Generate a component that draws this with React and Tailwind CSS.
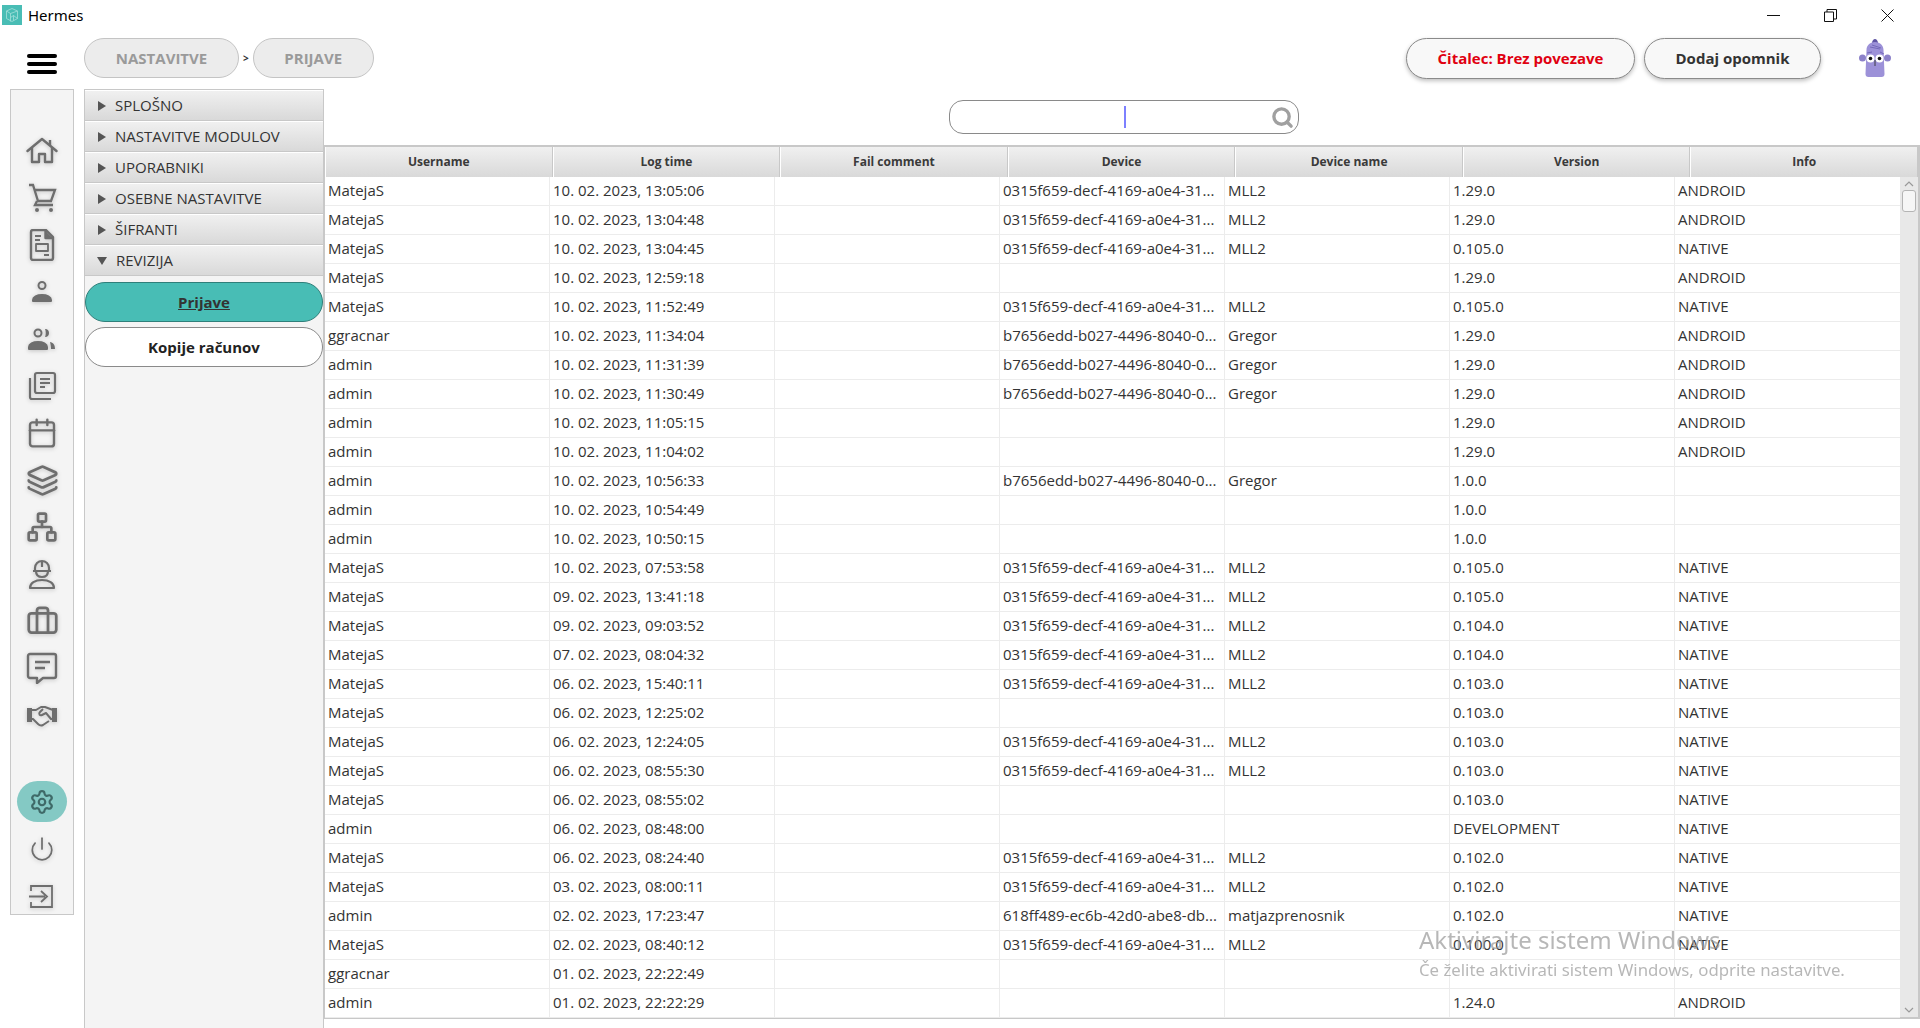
import { Calendar, Layers, Network, Briefcase, Settings, Power, Search } from 'lucide-react'

const DEV1 = '0315f659-decf-4169-a0e4-31...'
const DEV2 = 'b7656edd-b027-4496-8040-0...'
const DEV3 = '618ff489-ec6b-42d0-abe8-db...'

const columns = ['Username', 'Log time', 'Fail comment', 'Device', 'Device name', 'Version', 'Info']

const rows = [
  ['MatejaS', '10. 02. 2023, 13:05:06', DEV1, 'MLL2', '1.29.0', 'ANDROID'],
  ['MatejaS', '10. 02. 2023, 13:04:48', DEV1, 'MLL2', '1.29.0', 'ANDROID'],
  ['MatejaS', '10. 02. 2023, 13:04:45', DEV1, 'MLL2', '0.105.0', 'NATIVE'],
  ['MatejaS', '10. 02. 2023, 12:59:18', '', '', '1.29.0', 'ANDROID'],
  ['MatejaS', '10. 02. 2023, 11:52:49', DEV1, 'MLL2', '0.105.0', 'NATIVE'],
  ['ggracnar', '10. 02. 2023, 11:34:04', DEV2, 'Gregor', '1.29.0', 'ANDROID'],
  ['admin', '10. 02. 2023, 11:31:39', DEV2, 'Gregor', '1.29.0', 'ANDROID'],
  ['admin', '10. 02. 2023, 11:30:49', DEV2, 'Gregor', '1.29.0', 'ANDROID'],
  ['admin', '10. 02. 2023, 11:05:15', '', '', '1.29.0', 'ANDROID'],
  ['admin', '10. 02. 2023, 11:04:02', '', '', '1.29.0', 'ANDROID'],
  ['admin', '10. 02. 2023, 10:56:33', DEV2, 'Gregor', '1.0.0', ''],
  ['admin', '10. 02. 2023, 10:54:49', '', '', '1.0.0', ''],
  ['admin', '10. 02. 2023, 10:50:15', '', '', '1.0.0', ''],
  ['MatejaS', '10. 02. 2023, 07:53:58', DEV1, 'MLL2', '0.105.0', 'NATIVE'],
  ['MatejaS', '09. 02. 2023, 13:41:18', DEV1, 'MLL2', '0.105.0', 'NATIVE'],
  ['MatejaS', '09. 02. 2023, 09:03:52', DEV1, 'MLL2', '0.104.0', 'NATIVE'],
  ['MatejaS', '07. 02. 2023, 08:04:32', DEV1, 'MLL2', '0.104.0', 'NATIVE'],
  ['MatejaS', '06. 02. 2023, 15:40:11', DEV1, 'MLL2', '0.103.0', 'NATIVE'],
  ['MatejaS', '06. 02. 2023, 12:25:02', '', '', '0.103.0', 'NATIVE'],
  ['MatejaS', '06. 02. 2023, 12:24:05', DEV1, 'MLL2', '0.103.0', 'NATIVE'],
  ['MatejaS', '06. 02. 2023, 08:55:30', DEV1, 'MLL2', '0.103.0', 'NATIVE'],
  ['MatejaS', '06. 02. 2023, 08:55:02', '', '', '0.103.0', 'NATIVE'],
  ['admin', '06. 02. 2023, 08:48:00', '', '', 'DEVELOPMENT', 'NATIVE'],
  ['MatejaS', '06. 02. 2023, 08:24:40', DEV1, 'MLL2', '0.102.0', 'NATIVE'],
  ['MatejaS', '03. 02. 2023, 08:00:11', DEV1, 'MLL2', '0.102.0', 'NATIVE'],
  ['admin', '02. 02. 2023, 17:23:47', DEV3, 'matjazprenosnik', '0.102.0', 'NATIVE'],
  ['MatejaS', '02. 02. 2023, 08:40:12', DEV1, 'MLL2', '0.100.0', 'NATIVE'],
  ['ggracnar', '01. 02. 2023, 22:22:49', '', '', '', ''],
  ['admin', '01. 02. 2023, 22:22:29', '', '', '1.24.0', 'ANDROID'],
]

const sections = ['SPLOŠNO', 'NASTAVITVE MODULOV', 'UPORABNIKI', 'OSEBNE NASTAVITVE', 'ŠIFRANTI']

function Logo() {
  return (
    <svg width="20" height="20" viewBox="0 0 20 20" fill="none">
      <rect width="20" height="20" fill="#49bdb5" />
      <path d="M10 3.500l5.500 2.500v7.500L10 16.500l-5.500-3V6zM4.500 6l4 2.500v8M15.500 6l-7 2.500M8.500 12.500l3-2v5M11.500 10.500l4 3" stroke="#a5e0db" strokeWidth="0.8" />
    </svg>
  )
}

function Mascot() {
  return (
    <svg width="32" height="40" viewBox="0 0 32 40">
      <path d="M13 5c0-2 1.500-4 3-4s3 2 3 4z" fill="#5f54a3" />
      <path d="M7.500 12c0-4 3-8 8.500-8s8.500 4 8.500 8l1 24c0 2-1 3-3 3H9.500c-2 0-3-1-3-3z" fill="#9c91d8" />
      <circle cx="3.500" cy="20" r="3.500" fill="#8c81c9" />
      <circle cx="28.500" cy="20" r="3.500" fill="#8c81c9" />
      <path d="M11 9l10 2M13 7l9 3M21 14l4 2M8 15l5-1" stroke="#6f64b5" strokeWidth="0.9" fill="none" />
      <circle cx="11.500" cy="20.500" r="4" fill="#fff" />
      <circle cx="20.500" cy="20.500" r="4" fill="#fff" />
      <circle cx="11.500" cy="20.500" r="1.800" fill="#111" />
      <circle cx="20.500" cy="20.500" r="1.800" fill="#111" />
      <path d="M16 22v6" stroke="#333" strokeWidth="0.9" />
    </svg>
  )
}

const iconProps = { width: 32, height: 32, viewBox: '0 0 32 32', fill: 'none', stroke: 'currentColor', strokeWidth: 2.2 }

function HomeIcon() {
  return (
    <svg {...iconProps} strokeWidth="2.4" strokeLinejoin="round">
      <path d="M1.500 16L16 4l14.500 12" strokeLinecap="round" />
      <path d="M6 13v14h7v-8h6v8h7V13M24 5v5" />
    </svg>
  )
}

function CartIcon() {
  return (
    <svg {...iconProps} strokeWidth="2.3">
      <path d="M3 3h4l5 16h14M8 8h21l-4 11" />
      <path d="M11 19l-2 4h18" />
      <circle cx="11" cy="28" r="2" fill="currentColor" stroke="none" />
      <circle cx="25" cy="28" r="2" fill="currentColor" stroke="none" />
    </svg>
  )
}

function FileIcon() {
  return (
    <svg {...iconProps} strokeWidth="2.4" strokeLinejoin="round">
      <path d="M5 3a2 2 0 012-2h13l7 7v21a2 2 0 01-2 2H7a2 2 0 01-2-2z" />
      <path d="M19.500 2v7h7" fill="currentColor" />
      <path d="M9 7h6M9 11h5M10 15h12v7H10zM18 26h5" strokeWidth="1.800" />
    </svg>
  )
}

function UserIcon() {
  return (
    <svg {...iconProps} strokeWidth="2">
      <circle cx="16" cy="9.500" r="3.500" />
      <path d="M7 25v-1c0-3 4-5 9-5s9 2 9 5v1z" fill="currentColor" strokeLinejoin="round" />
    </svg>
  )
}

function UsersIcon() {
  return (
    <svg {...iconProps} strokeWidth="2">
      <circle cx="12" cy="10" r="3.500" />
      <path d="M19 6c3 0 4 2 4 4s-1 4-4 4c1-2 1-6 0-8z" fill="currentColor" stroke="none" />
      <path d="M3 26v-2c0-3 4-5 9-5s9 2 9 5v2z" fill="currentColor" strokeLinejoin="round" />
      <path d="M24 19c3 .5 5 2.500 5 7h-4c0-3-.5-5-1-7z" fill="currentColor" stroke="none" />
    </svg>
  )
}

function PagesIcon() {
  return (
    <svg {...iconProps}>
      <rect x="9" y="3" width="20" height="20" rx="2" />
      <path d="M14 9h10M14 13h10M14 17h5" />
      <path d="M4 8v19c0 1 1 2 2 2h19" />
    </svg>
  )
}

function WorkerIcon() {
  return (
    <svg {...iconProps}>
      <path d="M9 13V10a7 7 0 0114 0v3M7 13h18M16 3v6M10 13c0 4 2 6 6 6s6-2 6-6" />
      <path d="M4 30c0-5 5-8 12-8s12 3 12 8z" strokeLinejoin="round" />
    </svg>
  )
}

function ChatIcon() {
  return (
    <svg {...iconProps} strokeWidth="2.4">
      <path d="M2 4a2 2 0 012-2h24a2 2 0 012 2v20a2 2 0 01-2 2H17l-6 5v-5H4a2 2 0 01-2-2z" strokeLinejoin="round" />
      <path d="M9 10h15M9 16h10" />
    </svg>
  )
}

function HandsIcon() {
  return (
    <svg {...iconProps} strokeWidth="2">
      <path d="M2 10h3v12H2z" fill="currentColor" />
      <path d="M27 10h3v12h-3z" fill="currentColor" />
      <path d="M5 11h5l5-3h4l8 3M27 20l-2 0-5-6-4 2c-2 1-4-1-2-3l3-3" strokeLinejoin="round" />
      <path d="M5 20h2l5 5c2 2 3 2 5 1l6-4" strokeLinejoin="round" />
    </svg>
  )
}

function ExitIcon() {
  return (
    <svg {...iconProps} strokeWidth="1.8">
      <path d="M5 9V4h21v21H5v-5M3 14.500h16M15 9l6 5.500-6 5.500" />
    </svg>
  )
}

function RailIcon({ className, children }) {
  return (
    <div className={`flex items-center justify-center h-[32px] text-[#6e6e6e] drop-shadow-[0_1px_2px_rgba(0,0,0,0.2)] ${className || ''}`}>
      {children}
    </div>
  )
}

function Sidebar() {
  return (
    <div className="flex flex-col items-center w-[64px] h-[826px] mt-[15px] ml-[10px] bg-[#f4f4f4] border border-[#c8c8c8] pt-[45px]">
      <div className="flex flex-col gap-[15px]">
        <RailIcon><HomeIcon /></RailIcon>
        <RailIcon><CartIcon /></RailIcon>
        <RailIcon><FileIcon /></RailIcon>
        <RailIcon><UserIcon /></RailIcon>
        <RailIcon><UsersIcon /></RailIcon>
        <RailIcon><PagesIcon /></RailIcon>
        <RailIcon><Calendar size={32} strokeWidth={1.8} /></RailIcon>
        <RailIcon><Layers size={33} strokeWidth={2} /></RailIcon>
        <RailIcon><Network size={32} strokeWidth={2} /></RailIcon>
        <RailIcon><WorkerIcon /></RailIcon>
        <RailIcon><Briefcase size={33} strokeWidth={2} /></RailIcon>
        <RailIcon><ChatIcon /></RailIcon>
        <RailIcon><HandsIcon /></RailIcon>
      </div>
      <div className="flex items-center justify-center w-[50px] h-[41px] mt-[50px] rounded-full bg-[#84c9c4] text-[#3f6a68]">
        <Settings size={26} strokeWidth={2} />
      </div>
      <RailIcon className="mt-[11px]"><Power size={26} strokeWidth={1.6} /></RailIcon>
      <RailIcon className="mt-[17px]"><ExitIcon /></RailIcon>
    </div>
  )
}

function Crumb({ label, className }) {
  return (
    <div className={`flex items-center justify-center h-[40px] rounded-full bg-[#ececec] border border-[#c4c4c4] text-[15px] font-bold text-[#9a9a9a] ${className}`}>
      {label}
    </div>
  )
}

function Section({ label, open }) {
  return (
    <div className="flex items-center h-[31px] pl-[12px] gap-[9px] bg-gradient-to-b from-[#f0f0f0] to-[#d9d9d9] border-b border-t border-b-[#c8c8c8] border-t-white text-[15px] text-[#333]">
      <span className={open ? 'w-0 h-0 border-x-[5px] border-x-transparent border-t-[8px] border-t-[#555]' : 'w-0 h-0 ml-[1px] border-y-[5px] border-y-transparent border-l-[8px] border-l-[#555]'} />
      {label}
    </div>
  )
}

function GridTable() {
  return (
    <div className="flex flex-col border-y-2 border-r-2 border-l border-[#c8c8c8] h-[874px]">
      <div className="grid grid-cols-7 h-[30px] shrink-0">
        {columns.map((col) => (
          <div key={col} className="flex items-center justify-center bg-gradient-to-b from-[#f0f0f0] to-[#d9d9d9] border-l border-r border-l-white border-r-[#c8c8c8] text-[12px] font-bold text-[#3a3a3a]">
            {col}
          </div>
        ))}
      </div>
      <div className="flex flex-1 min-h-0">
        <div className="flex-1 min-w-0">
          {rows.map((row, i) => (
            <div key={i} className="grid grid-cols-7 h-[29px] border-b border-[#ececec] text-[15px] text-[#333]">
              <div className="flex items-center pl-[3px] pb-[2px] border-r border-[#ececec]">{row[0]}</div>
              <div className="flex items-center pl-[3px] pb-[2px] border-r border-[#ececec]">{row[1]}</div>
              <div className="border-r border-[#ececec]" />
              <div className="flex items-center pl-[3px] pb-[2px] border-r border-[#ececec] whitespace-nowrap overflow-hidden">{row[2]}</div>
              <div className="flex items-center pl-[3px] pb-[2px] border-r border-[#ececec]">{row[3]}</div>
              <div className="flex items-center pl-[3px] pb-[2px] border-r border-[#ececec]">{row[4]}</div>
              <div className="flex items-center pl-[3px] pb-[2px]">{row[5]}</div>
            </div>
          ))}
        </div>
        <div className="flex flex-col items-center w-[18px] shrink-0 bg-[#e8e8e8] pt-[2px]">
          <svg width="12" height="10" viewBox="0 0 12 10" fill="none" stroke="#999" strokeWidth="1.2"><path d="M2 7l4-4 4 4" /></svg>
          <div className="w-[14px] h-[22px] mt-[1px] rounded-[3px] bg-[#f6f6f6] border border-[#b4b4b4]" />
          <svg className="mt-auto mb-[2px]" width="12" height="10" viewBox="0 0 12 10" fill="none" stroke="#999" strokeWidth="1.2"><path d="M2 3l4 4 4-4" /></svg>
        </div>
      </div>
    </div>
  )
}

export default function App() {
  return (
    <div className="relative flex flex-col w-[1920px] h-[1028px] overflow-hidden bg-white font-['Open_Sans',sans-serif]">
      {/* Title bar */}
      <div className="flex items-center justify-between h-[30px] shrink-0 pl-[2px]">
        <div className="flex items-center gap-[6px] text-[15px] text-black font-['Noto_Sans',sans-serif]">
          <Logo />
          Hermes
        </div>
        <div className="flex items-center gap-[44px] pr-[26px]">
          <svg width="13" height="13" viewBox="0 0 13 13" stroke="#111" fill="none"><path d="M0 6.500h13" /></svg>
          <svg width="13" height="13" viewBox="0 0 13 13" stroke="#111" fill="none"><path d="M.5 3h9v9.500h-9zM3 3V.5h9.500V10H9.500" /></svg>
          <svg width="13" height="13" viewBox="0 0 13 13" stroke="#111" fill="none"><path d="M.5.500l12 12M12.500.500l-12 12" /></svg>
        </div>
      </div>

      <div className="flex flex-1 min-h-0">
        {/* Left rail */}
        <div className="w-[84px] shrink-0">
          <div className="flex flex-col gap-[4px] w-[30px] ml-[27px] mt-[24px]">
            <div className="h-[4px] rounded-full bg-black" />
            <div className="h-[4px] rounded-full bg-black" />
            <div className="h-[4px] rounded-full bg-black" />
          </div>
          <Sidebar />
        </div>

        <div className="flex flex-col flex-1 min-w-0">
          {/* Top bar */}
          <div className="flex items-center h-[59px] shrink-0 pb-[3px]">
            <Crumb label="NASTAVITVE" className="w-[155px]" />
            <span className="mx-[4px] text-[10px] font-bold text-[#333]">&gt;</span>
            <Crumb label="PRIJAVE" className="w-[121px]" />
            <div className="flex items-center justify-center w-[229px] h-[41px] ml-auto rounded-full bg-[#f8f8f8] border border-[#8a8a8a] shadow-[0_2px_4px_rgba(0,0,0,0.25)] text-[15px] font-bold text-[#e00010]">
              Čitalec: Brez povezave
            </div>
            <div className="flex items-center justify-center w-[177px] h-[41px] ml-[9px] rounded-full bg-[#f8f8f8] border border-[#8a8a8a] shadow-[0_2px_4px_rgba(0,0,0,0.25)] text-[15px] font-bold text-[#333]">
              Dodaj opomnik
            </div>
            <div className="ml-[38px] mr-[29px]"><Mascot /></div>
          </div>

          <div className="flex flex-1 min-h-0">
            {/* Accordion */}
            <div className="flex flex-col w-[240px] shrink-0 bg-[#f4f4f4] border-l border-r border-t border-[#c8c8c8]">
              {sections.map((s) => <Section key={s} label={s} />)}
              <Section label="REVIZIJA" open />
              <button className="h-[40px] mt-[6px] rounded-full bg-[#48bdb5] border border-[#2f7f7a] text-[15px] font-bold underline text-[#333]">
                Prijave
              </button>
              <button className="h-[40px] mt-[5px] rounded-full bg-white border border-[#8a8a8a] text-[15px] font-bold text-[#222]">
                Kopije računov
              </button>
            </div>

            <div className="flex flex-col flex-1 min-w-0">
              {/* Search */}
              <div className="flex justify-center h-[56px] shrink-0 pt-[11px] pl-[3px]">
                <div className="flex items-center w-[350px] h-[34px] rounded-[14px] bg-white border border-[#8a8a8a] pr-[4px]">
                  <div className="w-[2px] h-[22px] ml-[174px] bg-[#7d80ff]" />
                  <Search className="ml-auto text-[#a0a0a0]" size={23} strokeWidth={3.5} />
                </div>
              </div>
              <GridTable />
            </div>
          </div>
        </div>
      </div>

      {/* Windows watermark */}
      <div className="absolute left-[1419px] top-[924px] text-[#9a9a9a] opacity-70 pointer-events-none font-['Noto_Sans',sans-serif]">
        <div className="text-[24px] leading-[32px]">Aktivirajte sistem Windows</div>
        <div className="text-[16.800px] leading-[28px]">Če želite aktivirati sistem Windows, odprite nastavitve.</div>
      </div>
    </div>
  )
}
